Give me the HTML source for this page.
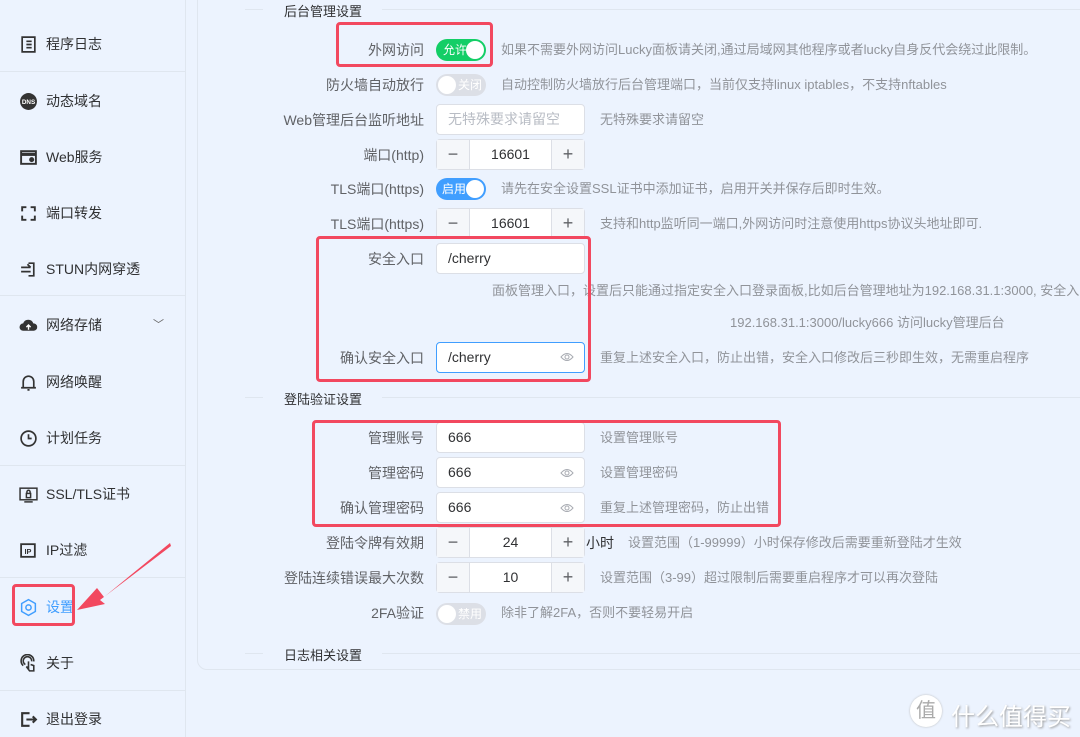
<!DOCTYPE html><html><head><meta charset="utf-8"><style>
*{box-sizing:border-box;margin:0;padding:0}
body{width:1080px;height:737px;overflow:hidden;background:#ecf3fe;font-family:"Liberation Sans","Noto Sans CJK SC",sans-serif;font-size:14px;color:#606266;position:relative}
.a{position:absolute;white-space:nowrap}
.side{position:absolute;left:0;top:0;width:186px;height:737px;border-right:1px solid #dfe6ef;border-radius:0 0 0 14px}
.mi{position:absolute;left:19px;font-size:14px;color:#303133;display:flex;align-items:center;gap:8px;height:20px}
.mi svg{width:19px;height:19px}
.sep{position:absolute;left:0;width:186px;height:1px;background:#dfe6ef}
.panel{position:absolute;left:197px;top:-10px;width:900px;height:680px;border:1px solid #dfe6ef;border-radius:10px}
.lbl{position:absolute;right:656px;text-align:right;white-space:nowrap;height:20px;line-height:20px}
.help{position:absolute;color:#909399;font-size:13px;white-space:nowrap;line-height:20px}
.inp{position:absolute;left:436px;width:149px;height:31px;background:#fff;border:1px solid #dcdfe6;border-radius:4px;line-height:29px;padding-left:11px;color:#606266}
.num{position:absolute;left:436px;width:149px;height:31px;background:#fff;border:1px solid #dcdfe6;border-radius:4px;display:flex}
.num span{width:32px;background:#f5f7fa;text-align:center;line-height:29px;color:#606266;font-size:18px}
.num b{flex:1;text-align:center;font-weight:normal;line-height:29px;color:#303133;border-left:1px solid #dcdfe6;border-right:1px solid #dcdfe6}
.sw{position:absolute;left:436px;width:50px;height:22px;border-radius:11px;color:#fff;font-size:12px;line-height:22px}
.sw i{position:absolute;top:2px;width:18px;height:18px;border-radius:50%;background:#fff}
.sec{position:absolute;left:284px;color:#303133;font-size:13px}
.hl{position:absolute;height:1px;background:#dfe6ef}
.red{position:absolute;border:3px solid #f2485f;border-radius:4px}
.eye{position:absolute;left:560px;width:14px;height:10px}
</style></head><body>
<div class="side">
<div class="mi" style="top:34px"><svg viewBox="0 0 18 18" fill="none" stroke="#333" stroke-width="1.6"><path d="M3 2h12v14H3z"/><path d="M7 6h5M7 9h5M7 12h5"/></svg>程序日志</div>
<div class="sep" style="top:71px"></div>
<div class="mi" style="top:91px"><svg viewBox="0 0 18 18"><circle cx="9" cy="9" r="8" fill="#333"/><text x="9" y="11.5" font-size="6" fill="#fff" text-anchor="middle" font-family="Liberation Sans" font-weight="bold">DNS</text></svg>动态域名</div>
<div class="mi" style="top:147px"><svg viewBox="0 0 18 18" fill="none" stroke="#333" stroke-width="1.8"><rect x="2" y="3" width="14" height="12"/><path d="M2 6h14" stroke-width="3"/><circle cx="12" cy="11" r="1.5" fill="#333"/></svg>Web服务</div>
<div class="mi" style="top:203px"><svg viewBox="0 0 18 18" fill="none" stroke="#333" stroke-width="1.8"><path d="M3 7V3h4M15 11v4h-4M11 3h4v4M7 15H3v-4"/></svg>端口转发</div>
<div class="mi" style="top:259px"><svg viewBox="0 0 18 18" fill="none" stroke="#333" stroke-width="1.6"><path d="M2 7h9M2 11h9M8 4l3 3M9 3h5v12H9"/></svg>STUN内网穿透</div>
<div class="sep" style="top:295px"></div>
<div class="mi" style="top:315px"><svg viewBox="0 0 18 18"><path d="M4 14a3.5 3.5 0 0 1 0-7 5 5 0 0 1 9.5 0A3.5 3.5 0 0 1 14 14z" fill="#333"/><path d="M9 13V9M7 10.5l2-2 2 2" stroke="#fff" fill="none" stroke-width="1.3"/></svg>网络存储</div>
<div class="a" style="left:153px;top:316px;color:#666;font-size:11px">﹀</div>
<div class="sep" style="top:465px"></div>
<div class="mi" style="top:372px"><svg viewBox="0 0 18 18" fill="none" stroke="#333" stroke-width="1.6"><path d="M4 14V8a5 5 0 0 1 10 0v6M2 14h14M8 16h2"/></svg>网络唤醒</div>
<div class="mi" style="top:428px"><svg viewBox="0 0 18 18" fill="none" stroke="#333" stroke-width="1.6"><circle cx="9" cy="9" r="7"/><path d="M9 5v4h3"/></svg>计划任务</div>
<div class="mi" style="top:484px"><svg viewBox="0 0 18 18" fill="none" stroke="#333" stroke-width="1.4"><rect x="1" y="3" width="16" height="11"/><path d="M5 16h8"/><rect x="7" y="8" width="4" height="4"/><path d="M7.5 8V6.5a1.5 1.5 0 0 1 3 0V8"/></svg>SSL/TLS证书</div>
<div class="sep" style="top:577px"></div>
<div class="mi" style="top:540px"><svg viewBox="0 0 18 18" fill="none" stroke="#333" stroke-width="1.7"><rect x="2" y="3" width="13" height="12"/><text x="8.5" y="12.5" font-size="7" fill="#333" stroke="none" text-anchor="middle" font-family="Liberation Sans" font-weight="bold">IP</text></svg>IP过滤</div>
<div class="mi" style="top:597px;color:#409eff"><svg viewBox="0 0 18 18" fill="none" stroke="#409eff" stroke-width="1.4"><path d="M9 1.5l6.5 3.75v7.5L9 16.5 2.5 12.75v-7.5z"/><circle cx="9" cy="9" r="2.5"/></svg>设置</div>
<div class="mi" style="top:653px"><svg viewBox="0 0 18 18" fill="none" stroke="#333" stroke-width="1.5"><path d="M4 11a6 6 0 1 1 10-4M6 10a4 4 0 1 1 6-3M9 7v6l-2-1 3 4h4v-5l-3-1"/></svg>关于</div>
<div class="sep" style="top:690px"></div>
<div class="mi" style="top:709px"><svg viewBox="0 0 18 18" fill="none" stroke="#333" stroke-width="2"><path d="M10 3H3v12h7"/><path d="M7 9h9M13 6l3 3-3 3"/></svg>退出登录</div>
</div>
<div class="panel"></div>

<div class="hl" style="left:245px;top:9px;width:18px"></div><div class="hl" style="left:382px;top:9px;width:700px"></div>
<div class="sec" style="top:1px">后台管理设置</div>
<div class="hl" style="left:245px;top:397px;width:18px"></div><div class="hl" style="left:382px;top:397px;width:700px"></div>
<div class="sec" style="top:389px">登陆验证设置</div>
<div class="hl" style="left:245px;top:653px;width:18px"></div><div class="hl" style="left:382px;top:653px;width:700px"></div>
<div class="sec" style="top:645px">日志相关设置</div>

<div class="lbl" style="top:40px">外网访问</div>
<div class="sw" style="top:39px;background:#13ce66"><span style="position:absolute;left:7px">允许</span><i style="left:30px"></i></div>
<div class="help" style="left:501px;top:40px">如果不需要外网访问Lucky面板请关闭,通过局域网其他程序或者lucky自身反代会绕过此限制。</div>

<div class="lbl" style="top:75px">防火墙自动放行</div>
<div class="sw" style="top:74px;background:#dcdfe6"><i style="left:2px"></i><span style="position:absolute;left:22px">关闭</span></div>
<div class="help" style="left:501px;top:75px">自动控制防火墙放行后台管理端口，当前仅支持linux iptables，不支持nftables</div>

<div class="lbl" style="top:110px">Web管理后台监听地址</div>
<div class="inp" style="top:104px;color:#b8bcc4">无特殊要求请留空</div>
<div class="help" style="left:600px;top:110px">无特殊要求请留空</div>

<div class="lbl" style="top:145px">端口(http)</div>
<div class="num" style="top:139px"><span>−</span><b>16601</b><span>+</span></div>

<div class="lbl" style="top:179px">TLS端口(https)</div>
<div class="sw" style="top:178px;background:#409eff"><span style="position:absolute;left:6px">启用</span><i style="left:30px"></i></div>
<div class="help" style="left:501px;top:179px">请先在安全设置SSL证书中添加证书，启用开关并保存后即时生效。</div>

<div class="lbl" style="top:214px">TLS端口(https)</div>
<div class="num" style="top:208px"><span>−</span><b>16601</b><span>+</span></div>
<div class="help" style="left:600px;top:214px">支持和http监听同一端口,外网访问时注意使用https协议头地址即可.</div>

<div class="lbl" style="top:249px">安全入口</div>
<div class="inp" style="top:243px;color:#303133">/cherry</div>
<div class="help" style="left:492px;top:281px">面板管理入口，设置后只能通过指定安全入口登录面板,比如后台管理地址为192.168.31.1:3000, 安全入口</div>
<div class="help" style="left:730px;top:313px">192.168.31.1:3000/lucky666 访问lucky管理后台</div>

<div class="lbl" style="top:348px">确认安全入口</div>
<div class="inp" style="top:342px;color:#303133;border-color:#409eff">/cherry</div>
<svg class="eye" style="top:352px" viewBox="0 0 14 10" fill="none" stroke="#a8abb2" stroke-width="1"><path d="M1 5q6-7 12 0q-6 7-12 0z"/><circle cx="7" cy="5" r="2"/></svg>
<div class="help" style="left:600px;top:348px">重复上述安全入口，防止出错，安全入口修改后三秒即生效，无需重启程序</div>

<div class="lbl" style="top:428px">管理账号</div>
<div class="inp" style="top:422px;color:#303133">666</div>
<div class="help" style="left:600px;top:428px">设置管理账号</div>

<div class="lbl" style="top:463px">管理密码</div>
<div class="inp" style="top:457px;color:#303133">666</div>
<svg class="eye" style="top:468px" viewBox="0 0 14 10" fill="none" stroke="#a8abb2" stroke-width="1"><path d="M1 5q6-7 12 0q-6 7-12 0z"/><circle cx="7" cy="5" r="2"/></svg>
<div class="help" style="left:600px;top:463px">设置管理密码</div>

<div class="lbl" style="top:498px">确认管理密码</div>
<div class="inp" style="top:492px;color:#303133">666</div>
<svg class="eye" style="top:503px" viewBox="0 0 14 10" fill="none" stroke="#a8abb2" stroke-width="1"><path d="M1 5q6-7 12 0q-6 7-12 0z"/><circle cx="7" cy="5" r="2"/></svg>
<div class="help" style="left:600px;top:498px">重复上述管理密码，防止出错</div>

<div class="lbl" style="top:533px">登陆令牌有效期</div>
<div class="num" style="top:527px"><span>−</span><b>24</b><span>+</span></div>
<div class="a" style="left:586px;top:533px;color:#303133">小时</div>
<div class="help" style="left:628px;top:533px">设置范围（1-99999）小时保存修改后需要重新登陆才生效</div>

<div class="lbl" style="top:568px">登陆连续错误最大次数</div>
<div class="num" style="top:562px"><span>−</span><b>10</b><span>+</span></div>
<div class="help" style="left:600px;top:568px">设置范围（3-99）超过限制后需要重启程序才可以再次登陆</div>

<div class="lbl" style="top:603px">2FA验证</div>
<div class="sw" style="top:603px;background:#dcdfe6"><i style="left:2px"></i><span style="position:absolute;left:22px">禁用</span></div>
<div class="help" style="left:501px;top:603px">除非了解2FA，否则不要轻易开启</div>

<div class="red" style="left:336px;top:22px;width:157px;height:45px"></div>
<div class="red" style="left:316px;top:236px;width:275px;height:146px"></div>
<div class="red" style="left:312px;top:420px;width:469px;height:107px"></div>
<div class="red" style="left:12px;top:584px;width:63px;height:42px"></div>
<svg class="a" style="left:0;top:0" width="200" height="640"><polygon points="170,543 104,597 97,588 77,610 105,604 100,600 171,546" fill="#f2485f"/></svg>

<div class="a" style="left:910px;top:695px;width:32px;height:32px;border-radius:50%;background:#fff;color:#aaa;font-size:20px;text-align:center;line-height:32px;box-shadow:0 0 2px #bbb">值</div>
<div class="a" style="left:951px;top:697px;color:#fff;font-size:24px;text-shadow:1px 1px 2px #999">什么值得买</div>
</body></html>
